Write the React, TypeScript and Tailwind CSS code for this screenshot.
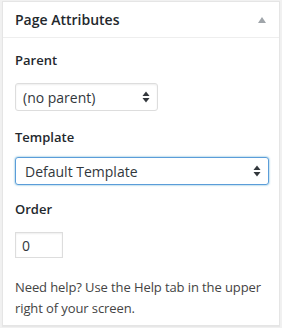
import React from "react";

function UpDown() {
  return (
    <svg width="8" height="12" viewBox="0 0 8 12" className="absolute right-[8px] top-1/2 -translate-y-1/2">
      <path d="M4 0.5 L7.5 5 L0.5 5 Z" fill="#32373c" />
      <path d="M4 11.5 L7.5 7 L0.5 7 Z" fill="#32373c" />
    </svg>
  );
}

export default function App() {
  return (
    <div
      className="w-[282px] h-[328px] bg-[#f1f1f1] pt-[1px] pl-[2px] text-[13px] text-[#444]"
      style={{ fontFamily: '"Open Sans", "Liberation Sans", sans-serif' }}
    >
      <div className="w-[278px] h-[325px] bg-white border border-[#e5e5e5] shadow-[0_1px_1px_rgba(0,0,0,0.04)]">
        {/* header */}
        <div className="h-[36px] flex items-center justify-between border-b border-[#eee] pl-[12px] pr-[12px]">
          <h2 className="text-[14px] font-semibold text-[#23282d] leading-none">Page Attributes</h2>
          <svg width="10" height="8" viewBox="0 0 10 8">
            <path d="M5 1 L9 7 L1 7 Z" fill="#a0a5aa" />
          </svg>
        </div>

        <div className="px-[12px] pt-[12px]">
          <p className="font-semibold leading-[20px] text-[#23282d]">Parent</p>
          <div className="relative mt-[13px] w-[143px] h-[28px]">
            <div className="h-full border border-[#ddd] rounded-[3px] shadow-[inset_0_1px_2px_rgba(0,0,0,0.07)] flex items-center pl-[7px] text-[14px] text-[#32373c]">
              (no parent)
            </div>
            <UpDown />
          </div>

          <p className="font-semibold leading-[20px] text-[#23282d] mt-[16px]">Template</p>
          <div className="relative mt-[10px] w-[254px] h-[28px]">
            <div className="h-full border border-[#5b9dd9] rounded-[3px] shadow-[0_0_2px_rgba(30,140,190,0.8)] flex items-center pl-[9px] text-[14px] text-[#32373c]">
              Default Template
            </div>
            <UpDown />
          </div>

          <p className="font-semibold leading-[20px] text-[#23282d] mt-[14px]">Order</p>
          <div className="mt-[13px] w-[48px] h-[26px] border border-[#ddd] shadow-[inset_0_1px_2px_rgba(0,0,0,0.07)] flex items-center pl-[6px] text-[14px] text-[#32373c]">
            0
          </div>

          <p className="mt-[19px] leading-[21px] -mr-[6px] tracking-[-0.1px]">
            Need help? Use the Help tab in the upper right of your screen.
          </p>
        </div>
      </div>
    </div>
  );
}
